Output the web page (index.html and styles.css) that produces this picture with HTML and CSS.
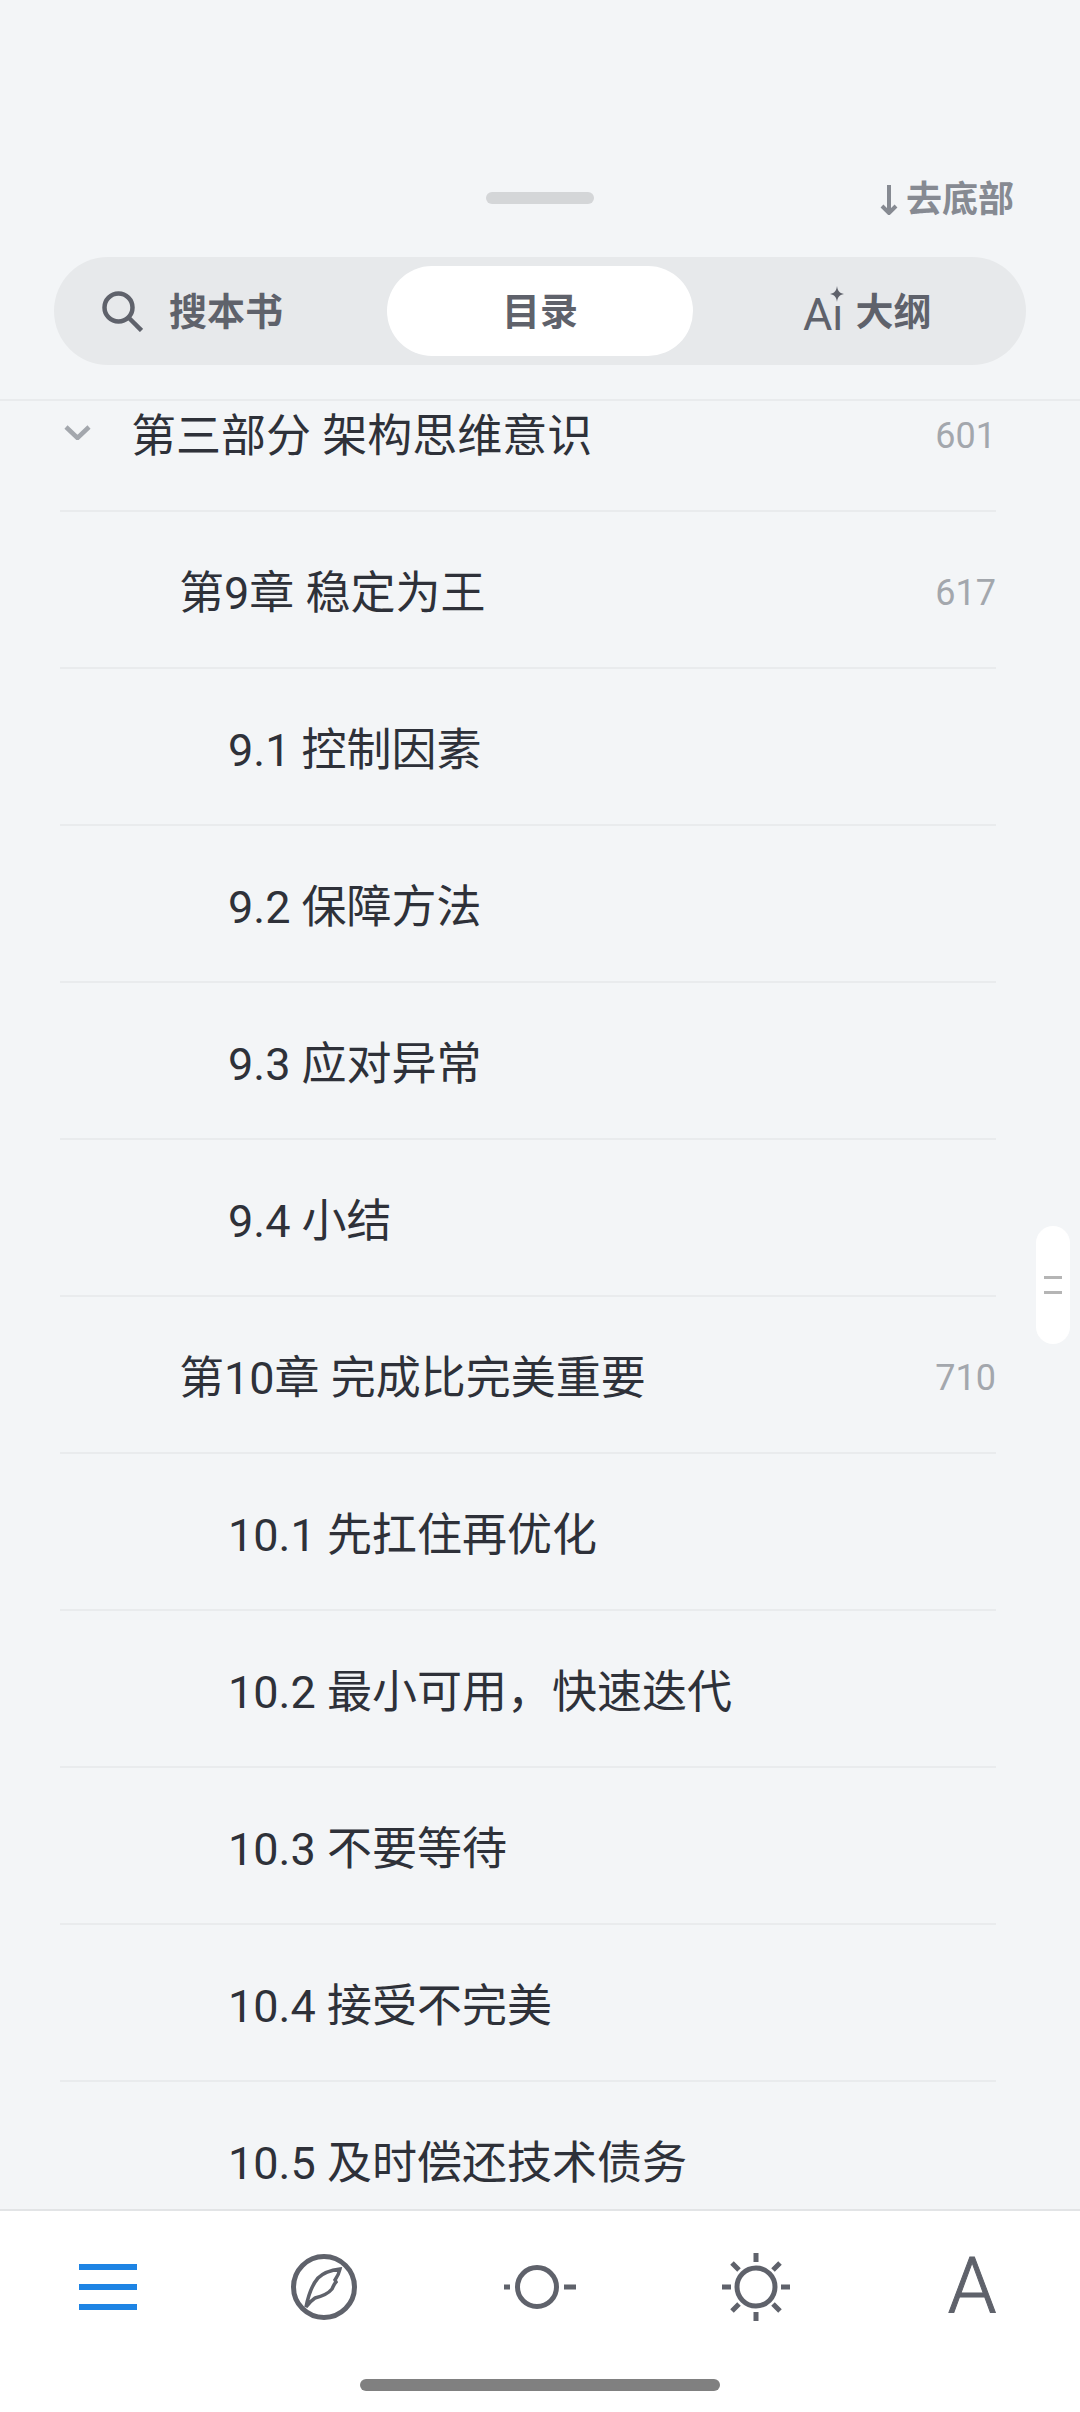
FILE: index.html

```html
<!DOCTYPE html>
<html lang="zh-CN">
<head>
    <meta charset="UTF-8">
    <meta name="viewport" content="width=device-width, initial-scale=1.0">
    <title>目录</title>
    <link rel="stylesheet" href="styles.css">
</head>
<body>
    <div class="page">
        <div class="panel-head">
            <div class="handle-row">
                <span class="handle"></span>
                <a class="to-bottom">
                    <svg class="arrow-down" viewBox="0 0 18 30"><path d="M9 0V28M2 21l7 7 7-7"/></svg>
                    <span>去底部</span>
                </a>
            </div>
            <div class="tabs">
                <div class="tab tab-search">
                    <svg class="search-icon" viewBox="0 0 41 41"><circle cx="16.5" cy="16.5" r="14"/><path d="M26.5 26.5L39.5 39.5"/></svg>
                    <span class="tab-label">搜本书</span>
                </div>
                <div class="tab tab-active"><span class="tab-label">目录</span></div>
                <div class="tab tab-outline">
                    <span class="ai-mark">Aı<svg class="ai-star" viewBox="0 0 14 16"><path d="M7 0C7.6 4.6 9 6.8 14 8 9 9.200 7.600 11.400 7 16 6.400 11.400 5 9.200 0 8 5 6.800 6.400 4.600 7 0Z"/></svg></span>
                    <span class="tab-label">大纲</span>
                </div>
            </div>
        </div>

        <div class="toc">
            <div class="toc-inner">
                <div class="row">
                    <svg class="chevron" viewBox="0 0 27 15"><path d="M2 2l11.500 11L25 2"/></svg>
                    <span class="row-title">第三部分 架构思维意识</span>
                    <span class="row-page">601</span>
                </div>
                <div class="row level-1"><span class="row-title">第9章 稳定为王</span><span class="row-page">617</span></div>
                <div class="row level-2"><span class="row-title">9.1 控制因素</span></div>
                <div class="row level-2"><span class="row-title">9.2 保障方法</span></div>
                <div class="row level-2"><span class="row-title">9.3 应对异常</span></div>
                <div class="row level-2"><span class="row-title">9.4 小结</span></div>
                <div class="row level-1"><span class="row-title">第10章 完成比完美重要</span><span class="row-page">710</span></div>
                <div class="row level-2"><span class="row-title">10.1 先扛住再优化</span></div>
                <div class="row level-2"><span class="row-title">10.2 最小可用，快速迭代</span></div>
                <div class="row level-2"><span class="row-title">10.3 不要等待</span></div>
                <div class="row level-2"><span class="row-title">10.4 接受不完美</span></div>
                <div class="row level-2"><span class="row-title">10.5 及时偿还技术债务</span></div>
            </div>
        </div>

        <div class="scroll-tab"><span></span><span></span></div>

        <div class="bottom-bar">
            <div class="tools">
                <div class="tool">
                    <svg class="menu-icon" viewBox="0 0 58 54"><path d="M0 7H58M0 27H58M0 47H58"/></svg>
                </div>
                <div class="tool">
                    <svg class="icon" viewBox="0 0 72 72">
                        <circle cx="36" cy="36" r="30.500"/>
                        <path class="thin" d="M18 56C20 46 23 35 30 27 36 21 44 19 52 18 51 23 49 26 47 29L48 31C46 33 45.500 35 44 38 40 43 35 45 27 47 24 49 21 52 18 56Z"/>
                    </svg>
                </div>
                <div class="tool">
                    <svg class="icon" viewBox="0 0 72 72">
                        <circle cx="33" cy="36" r="19.500"/>
                        <path d="M0 36H6M60 36H72"/>
                    </svg>
                </div>
                <div class="tool">
                    <svg class="icon" viewBox="0 0 72 72">
                        <circle cx="36" cy="36" r="19"/>
                        <path d="M36 2V11M36 61V70M2 36H11M61 36H70M12 12L19 19M53 53L60 60M60 12L53 19M19 53L12 60"/>
                    </svg>
                </div>
                <div class="tool"><span class="font-a">A</span></div>
            </div>
            <div class="home-row"><span class="home-bar"></span></div>
        </div>
    </div>
</body>
</html>
```

FILE: styles.css

```css
* {
    margin: 0;
    padding: 0;
    box-sizing: border-box;
}
body {
    background: #f3f5f7;
    font-family: Roboto, "Noto Sans CJK SC", sans-serif;
}
.page {
    position: relative;
    display: flex;
    flex-direction: column;
    width: 1080px;
    height: 2412px;
    overflow: hidden;
}

/* top */
.panel-head {
    height: 401px;
    flex-shrink: 0;
    padding: 160px 54px 0;
    border-bottom: 2px solid #e9ebed;
}
.handle-row {
    position: relative;
    display: flex;
    justify-content: center;
    align-items: center;
    height: 76px;
}
.handle {
    width: 108px;
    height: 12px;
    border-radius: 6px;
    background: #d4d6d8;
}
.to-bottom {
    position: absolute;
    right: 12px;
    top: 18px;
    display: flex;
    align-items: center;
    gap: 8px;
    font-size: 36px;
    line-height: 44px;
    font-weight: 700;
    color: #868a92;
}
.arrow-down {
    width: 18px;
    height: 30px;
    fill: none;
    stroke: #868a92;
    stroke-width: 4;
}
.tabs {
    display: grid;
    grid-template-columns: 324px 306px 1fr;
    align-items: center;
    height: 108px;
    margin-top: 21px;
    padding: 9px;
    border-radius: 54px;
    background: #e7e9eb;
}
.tab {
    display: flex;
    align-items: center;
    height: 90px;
    font-size: 38px;
    font-weight: 700;
    color: #5f626b;
}
.tab-label {
    margin-top: -5px;
}
.tab-search {
    padding-left: 39px;
}
.search-icon {
    width: 41px;
    height: 41px;
    margin-right: 26px;
    fill: none;
    stroke: #5f626b;
    stroke-width: 4.500;
}
.tab-active {
    justify-content: center;
    background: #fff;
    border-radius: 45px;
}
.tab-outline {
    padding-left: 110px;
}
.ai-mark {
    position: relative;
    top: 4px;
    margin-right: 12px;
    font-size: 45px;
    font-weight: 400;
    line-height: 54px;
    color: #5f626b;
}
.ai-star {
    position: absolute;
    right: 0;
    top: -2px;
    width: 14px;
    height: 16px;
    fill: #5f626b;
}

/* list */
.toc {
    flex: 1;
    overflow: hidden;
}
.toc-inner {
    margin: -46px 84px 0 60px;
}
.row {
    display: flex;
    align-items: center;
    height: 157px;
    border-bottom: 2px solid #e9ebed;
    font-size: 45px;
    color: #2e3139;
}
.level-1 {
    padding-left: 119px;
}
.level-2 {
    padding-left: 168px;
}
.row-title {
    flex: 1;
}
.row-page {
    font-size: 36px;
    color: #a3a7ad;
    margin-top: 6px;
}
.chevron {
    width: 27px;
    height: 15px;
    margin: 0 40px 0 4px;
    fill: none;
    stroke: #a3a7ad;
    stroke-width: 4.500;
}
.scroll-tab {
    position: absolute;
    left: 1036px;
    top: 1226px;
    display: flex;
    flex-direction: column;
    align-items: center;
    justify-content: center;
    gap: 12px;
    width: 34px;
    height: 118px;
    border-radius: 17px;
    background: #fff;
}
.scroll-tab span {
    width: 18px;
    height: 3px;
    background: #b5b5b5;
}

/* bottom */
.bottom-bar {
    height: 203px;
    flex-shrink: 0;
    background: #fff;
    border-top: 2px solid #e2e4e6;
}
.tools {
    display: flex;
    height: 152px;
}
.tool {
    flex: 1;
    display: flex;
    align-items: center;
    justify-content: center;
}
.menu-icon {
    width: 58px;
    height: 54px;
    fill: none;
    stroke: #1e84e4;
    stroke-width: 6;
}
.icon {
    width: 72px;
    height: 72px;
    fill: none;
    stroke: #5f626b;
    stroke-width: 5;
}
.icon .thin {
    stroke-width: 3.500;
}
.font-a {
    font-size: 78px;
    line-height: 78px;
    font-weight: 300;
    -webkit-text-stroke: 1px #5f626b;
    color: #5f626b;
}
.home-row {
    display: flex;
    justify-content: center;
    padding-top: 16px;
}
.home-bar {
    width: 360px;
    height: 12px;
    border-radius: 6px;
    background: #808080;
}
```
